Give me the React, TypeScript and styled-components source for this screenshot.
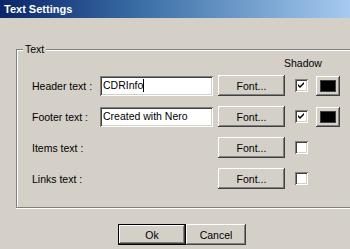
import React from 'react';
import styled, { createGlobalStyle } from 'styled-components';

const GlobalStyle = createGlobalStyle`
  html, body {
    margin: 0;
    padding: 0;
    width: 350px;
    height: 249px;
    overflow: hidden;
    background: #d4d0c8;
  }
  body {
    font-family: "Liberation Sans", Arial, sans-serif;
    font-size: 10.5px;
    color: #000;
  }
`;

const raised = `
  box-shadow:
    inset -1px -1px 0 #404040,
    inset 1px 1px 0 #ffffff,
    inset -2px -2px 0 #808080,
    inset 2px 2px 0 #d4d0c8;
`;

const sunken = `
  box-shadow:
    inset 1px 1px 0 #808080,
    inset -1px -1px 0 #ffffff,
    inset 2px 2px 0 #404040,
    inset -2px -2px 0 #d4d0c8;
`;

const Window = styled.div`
  width: 350px;
  height: 249px;
  display: flex;
  flex-direction: column;
  background: #d4d0c8;
  overflow: hidden;
`;

// caption bar fades out past the visible edge, the dialog is wider than the shot
const TitleBar = styled.div`
  height: 18px;
  display: flex;
  align-items: center;
  padding-left: 4px;
  background: linear-gradient(to right, #0a246a 0%, #3a6ea5 40%, #a6caf0 100%);
  color: #fff;
  font-weight: bold;
  font-size: 11px;
`;

const Body = styled.div`
  padding: 31px 0 0 16px;
  display: flex;
  flex-direction: column;
`;

const GroupBox = styled.div`
  position: relative;
  border: 1px solid #808080;
  border-right: none;
  box-shadow: inset 1px 1px 0 #fff, 0 1px 0 #fff;
  padding: 7px 0 17px 15px;
  height: 133px;
`;

const Legend = styled.span`
  position: absolute;
  top: -7px;
  left: 6px;
  padding: 0 2px;
  line-height: 13px;
  background: #d4d0c8;
`;

const Grid = styled.div`
  display: grid;
  grid-template-columns: 68px 118px 77px 21px 24px;
  grid-auto-rows: 21px;
  row-gap: 10px;
  align-items: center;
`;

const CaptionRow = styled.div`
  display: grid;
  grid-template-columns: 68px 118px 77px 21px 24px;
  height: 18px;
`;

const ShadowCaption = styled.div`
  grid-column: 4;
  margin-left: -11px;
  white-space: nowrap;
  line-height: 13px;
  align-self: start;
`;

const Label = styled.div`
  white-space: nowrap;
`;

const TextBox = styled.div`
  width: 113px;
  height: 20px;
  box-sizing: border-box;
  padding: 3px 3px 0;
  background: #fff;
  white-space: nowrap;
  overflow: hidden;
  display: flex;
  align-items: flex-start;
  ${sunken}
`;

const Caret = styled.span`
  display: inline-block;
  width: 1px;
  height: 13px;
  background: #000;
`;

const Button = styled.div<{ $w: number; $default?: boolean }>`
  width: ${(p) => p.$w}px;
  height: 21px;
  box-sizing: border-box;
  display: flex;
  align-items: center;
  justify-content: center;
  background: #d4d0c8;
  ${(p) =>
    p.$default
      ? `
    border: 1px solid #000;
    box-shadow:
      inset -1px -1px 0 #404040,
      inset 1px 1px 0 #ffffff,
      inset -2px -2px 0 #808080;
  `
      : raised}
`;

const Check = styled.div`
  width: 13px;
  height: 13px;
  box-sizing: border-box;
  background: #fff;
  display: flex;
  align-items: center;
  justify-content: center;
  ${sunken}
`;

const Swatch = styled.div`
  width: 24px;
  height: 20px;
  box-sizing: border-box;
  padding: 4px;
  background: #d4d0c8;
  ${raised}
`;

const SwatchFill = styled.div`
  width: 100%;
  height: 100%;
  background: #000;
  border: 1px solid #404040;
  box-sizing: border-box;
`;

const ButtonRow = styled.div`
  display: flex;
  padding: 16px 0 0 102px;
`;

const Tick = () => (
  <svg width="7" height="7" viewBox="0 0 7 7">
    <path d="M0 2 L2 4 L6 0 L6 2 L2 6 L0 4 Z" fill="#000" />
  </svg>
);

type Row = {
  label: string;
  text?: string;
  caret?: boolean;
  shadow: boolean;
};

const rows: Row[] = [
  { label: 'Header text :', text: 'CDRInfo', caret: true, shadow: true },
  { label: 'Footer text :', text: 'Created with Nero', shadow: true },
  { label: 'Items text :', shadow: false },
  { label: 'Links text :', shadow: false },
];

export default function App() {
  return (
    <>
      <GlobalStyle />
      <Window>
        <TitleBar>Text Settings</TitleBar>
        <Body>
          <GroupBox>
            <Legend>Text</Legend>
            <CaptionRow>
              <ShadowCaption>Shadow</ShadowCaption>
            </CaptionRow>
            <Grid>
              {rows.map((r) => (
                <React.Fragment key={r.label}>
                  <Label>{r.label}</Label>
                  <div>
                    {r.text !== undefined && (
                      <TextBox>
                        {r.text}
                        {r.caret && <Caret />}
                      </TextBox>
                    )}
                  </div>
                  <Button $w={67}>Font...</Button>
                  <Check>{r.shadow && <Tick />}</Check>
                  <div>
                    {r.shadow && (
                      <Swatch>
                        <SwatchFill />
                      </Swatch>
                    )}
                  </div>
                </React.Fragment>
              ))}
            </Grid>
          </GroupBox>
          <ButtonRow>
            <Button $w={68} $default>
              Ok
            </Button>
            <Button $w={60}>Cancel</Button>
          </ButtonRow>
        </Body>
      </Window>
    </>
  );
}
